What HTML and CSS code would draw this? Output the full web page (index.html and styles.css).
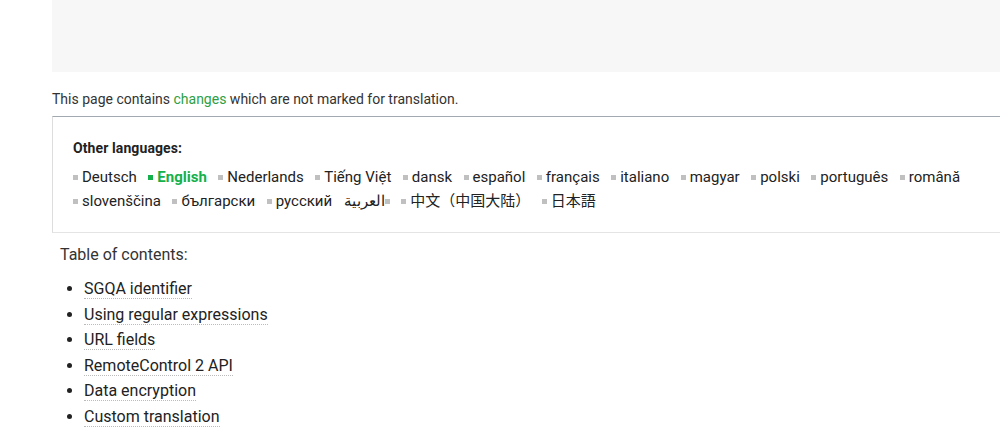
FILE: index.html
```html
<!DOCTYPE html>
<html lang="en">
<head>
<meta charset="utf-8">
<title>Page</title>
<link rel="stylesheet" href="styles.css">
</head>
<body>
<div class="content">
  <div class="banner"></div>
  <p class="notice">This page contains <a href="#" class="green">changes</a> which are not marked for translation.</p>
  <div class="langbox">
    <div class="langtitle">Other languages:</div>
    <ul class="langs">
      <li><a href="#">Deutsch</a></li>
      <li class="current"><a href="#">English</a></li>
      <li><a href="#">Nederlands</a></li>
      <li><a href="#">Tiếng Việt</a></li>
      <li><a href="#">dansk</a></li>
      <li><a href="#">español</a></li>
      <li><a href="#">français</a></li>
      <li><a href="#">italiano</a></li>
      <li><a href="#">magyar</a></li>
      <li><a href="#">polski</a></li>
      <li><a href="#">português</a></li>
      <li><a href="#">română</a></li>
      <li><a href="#">slovenščina</a></li>
      <li><a href="#">български</a></li>
      <li><a href="#">русский</a></li>
      <li class="rtl" dir="rtl"><a href="#" lang="ar">العربية</a></li>
      <li><a href="#" lang="zh">中文（中国大陆）</a></li>
      <li><a href="#" lang="ja">日本語</a></li>
    </ul>
  </div>
  <div class="toc">
    <div class="toctitle">Table of contents:</div>
    <ul class="toclist">
      <li><a href="#">SGQA identifier</a></li>
      <li><a href="#">Using regular expressions</a></li>
      <li><a href="#">URL fields</a></li>
      <li><a href="#">RemoteControl 2 API</a></li>
      <li><a href="#">Data encryption</a></li>
      <li><a href="#">Custom translation</a></li>
    </ul>
  </div>
</div>
</body>
</html>
```
FILE: styles.css
```css
html, body {
  margin: 0;
  padding: 0;
  background: #fff;
}
body {
  font-family: Roboto, "Noto Sans", "Noto Sans CJK SC", sans-serif;
  color: #333;
  overflow: hidden;
}
a {
  text-decoration: none;
  color: inherit;
}
.content {
  margin-left: 52px;
  margin-right: -20px;
}
.banner {
  height: 72px;
  background: #f7f7f7;
}
.notice {
  margin: 0;
  padding-top: 18px;
  height: 26px;
  font-size: 14px;
  line-height: 18px;
  color: #333;
}
.green {
  color: #2ea043;
}
.langbox {
  border-top: 1px solid #a2a9b1;
  border-left: 1px solid #dddddd;
  border-bottom: 1px solid #e4e4e4;
  padding: 22px 20px 19px 20px;
}
.langtitle {
  font-size: 14px;
  font-weight: 700;
  line-height: 18px;
  color: #222;
  margin-bottom: 8px;
  letter-spacing: 0.1px;
}
.langs {
  list-style: none;
  margin: 0;
  padding: 0;
  display: flex;
  flex-wrap: wrap;
  font-size: 15px;
  line-height: 24px;
  color: #222;
  max-width: 900px;
}
.langs li {
  display: flex;
  align-items: center;
  margin-right: 11.5px;
}
.langs li::before {
  content: "";
  width: 5px;
  height: 5px;
  background: #c0c0c0;
  margin-right: 4px;
}
.langs li.rtl::before {
  margin-right: 0;
  margin-left: 0;
}
.langs li.current a {
  color: #14b04c;
  font-weight: 700;
}
.langs li.current::before {
  background: #14b04c;
}
.toc {
  padding-left: 8px;
  padding-top: 10px;
}
.toctitle {
  font-size: 16px;
  line-height: 24px;
  color: #333;
}
.toclist {
  margin: 9px 0 0 0;
  padding-left: 24px;
  font-size: 16px;
  line-height: 25.6px;
}
.toclist li {
  color: #222;
}
.toclist a {
  border-bottom: 1px dotted #bbb;
}
```
